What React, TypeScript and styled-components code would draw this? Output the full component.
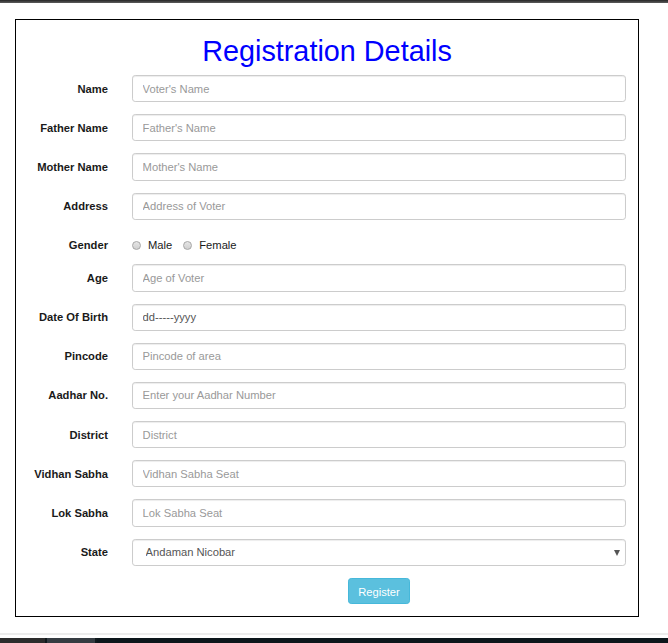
import React from 'react';
import styled, { createGlobalStyle } from 'styled-components';

const GlobalStyle = createGlobalStyle`
  html, body {
    margin: 0;
    padding: 0;
    background: #fff;
    font-family: 'Liberation Sans', Arial, sans-serif;
  }
  * { box-sizing: border-box; }
`;

const TopBar = styled.div`
  height: 3px;
  background: linear-gradient(#262626, #5c5c5c);
`;

const Page = styled.div`
  padding: 16px 0 0 15px;
`;

const Card = styled.form`
  width: 624px;
  border: 1px solid #000;
  padding: 16px 0 0;
`;

const Title = styled.h1`
  margin: 0 0 7.3px;
  font-size: 28.8px;
  line-height: 1.1;
  font-weight: 500;
  color: #0000ff;
  text-align: center;
`;

const Group = styled.div<{ $tight?: boolean }>`
  display: grid;
  grid-template-columns: 104px 1fr;
  margin-bottom: ${(p) => (p.$tight ? '11px' : '12px')};
`;

const Label = styled.label`
  padding: 5.6px 12px 0 0;
  font-size: 11.2px;
  line-height: 16px;
  font-weight: bold;
  color: #1a1a1a;
  text-align: right;
`;

const Field = styled.div<{ $center?: boolean; $inline?: boolean }>`
  padding: ${(p) => (p.$inline ? '5.6px 12px 0' : '0 12px')};
  position: relative;
  display: ${(p) => (p.$inline ? 'flex' : 'block')};
  align-items: center;
  text-align: ${(p) => (p.$center ? 'center' : 'left')};
`;

const Input = styled.input`
  display: block;
  width: 100%;
  height: 27.2px;
  padding: 4.8px 9.6px;
  font-family: inherit;
  font-size: 11.2px;
  color: #555;
  background: #fff;
  border: 1px solid #ccc;
  border-radius: 3.2px;
  box-shadow: inset 0 1px 1px rgba(0, 0, 0, 0.075);
  outline: none;

  &::placeholder {
    color: #999;
  }
`;

const Select = styled.select`
  display: block;
  width: 100%;
  height: 27.2px;
  padding: 0 0 0 12.5px;
  font-family: inherit;
  font-size: 11.2px;
  color: #555;
  background: #fff;
  border: 1px solid #ccc;
  border-radius: 3.2px;
  box-shadow: inset 0 1px 1px rgba(0, 0, 0, 0.075);
  appearance: none;
  outline: none;
`;

const Caret = styled.span`
  position: absolute;
  right: 18px;
  top: 11px;
  width: 0;
  height: 0;
  border-left: 3.5px solid transparent;
  border-right: 3.5px solid transparent;
  border-top: 6px solid #555;
  pointer-events: none;
`;

const RadioLabel = styled.label`
  display: inline-flex;
  align-items: center;
  gap: 7px;
  margin-right: 11px;
  font-size: 11.2px;
  line-height: 16px;
  color: #1a1a1a;
`;

const Radio = styled.input`
  appearance: none;
  margin: 0;
  width: 9px;
  height: 9px;
  border-radius: 50%;
  border: 1px solid #a6a6a6;
  background: linear-gradient(#e6e6e6, #cfcfcf);
`;

const Button = styled.button`
  display: inline-block;
  height: 26.5px;
  padding: 4.8px 9.6px;
  font-family: inherit;
  font-size: 11.2px;
  line-height: 16px;
  color: #fff;
  background: #5bc0de;
  border: 1px solid #46b8da;
  border-radius: 3.2px;
  cursor: pointer;
`;

const Footer = styled.div`
  margin-top: 16px;
  border-top: 2px solid #ececec;
  padding-top: 3px;
`;

const Taskbar = styled.div`
  display: flex;
  height: 10px;
  background: #0c161b;
`;

const Tab = styled.div<{ $w: number; $bg: string }>`
  width: ${(p) => p.$w}px;
  background: ${(p) => p.$bg};
  border-right: 2px solid #10191d;
`;

const fields = [
  { label: 'Name', placeholder: "Voter's Name" },
  { label: 'Father Name', placeholder: "Father's Name" },
  { label: 'Mother Name', placeholder: "Mother's Name" },
  { label: 'Address', placeholder: 'Address of Voter' },
];

const fields2 = [
  { label: 'Pincode', placeholder: 'Pincode of area' },
  { label: 'Aadhar No.', placeholder: 'Enter your Aadhar Number' },
  { label: 'District', placeholder: 'District' },
  { label: 'Vidhan Sabha', placeholder: 'Vidhan Sabha Seat' },
  { label: 'Lok Sabha', placeholder: 'Lok Sabha Seat' },
];

const App: React.FC = () => {
  return (
    <>
      <GlobalStyle />
      <TopBar />
      <Page>
        <Card onSubmit={(e) => e.preventDefault()}>
          <Title>Registration Details</Title>
          {fields.map((f) => (
            <Group key={f.label}>
              <Label>{f.label}</Label>
              <Field>
                <Input placeholder={f.placeholder} />
              </Field>
            </Group>
          ))}
          <Group $tight>
            <Label>Gender</Label>
            <Field $inline>
              <RadioLabel>
                <Radio type="radio" name="gender" />
                Male
              </RadioLabel>
              <RadioLabel>
                <Radio type="radio" name="gender" />
                Female
              </RadioLabel>
            </Field>
          </Group>
          <Group>
            <Label>Age</Label>
            <Field>
              <Input placeholder="Age of Voter" />
            </Field>
          </Group>
          <Group>
            <Label>Date Of Birth</Label>
            <Field>
              <Input defaultValue="dd-----yyyy" />
            </Field>
          </Group>
          {fields2.map((f) => (
            <Group key={f.label}>
              <Label>{f.label}</Label>
              <Field>
                <Input placeholder={f.placeholder} />
              </Field>
            </Group>
          ))}
          <Group>
            <Label>State</Label>
            <Field>
              <Select defaultValue="Andaman Nicobar">
                <option>Andaman Nicobar</option>
                <option>Andhra Pradesh</option>
                <option>Assam</option>
                <option>Bihar</option>
              </Select>
              <Caret />
            </Field>
          </Group>
          <Group>
            <span />
            <Field $center>
              <Button type="submit">Register</Button>
            </Field>
          </Group>
        </Card>
      </Page>
      <Footer>
        <Taskbar>
          <Tab $w={47} $bg="#2c2c2c" />
          <Tab $w={50} $bg="#353c42" />
        </Taskbar>
      </Footer>
    </>
  );
};

export default App;
